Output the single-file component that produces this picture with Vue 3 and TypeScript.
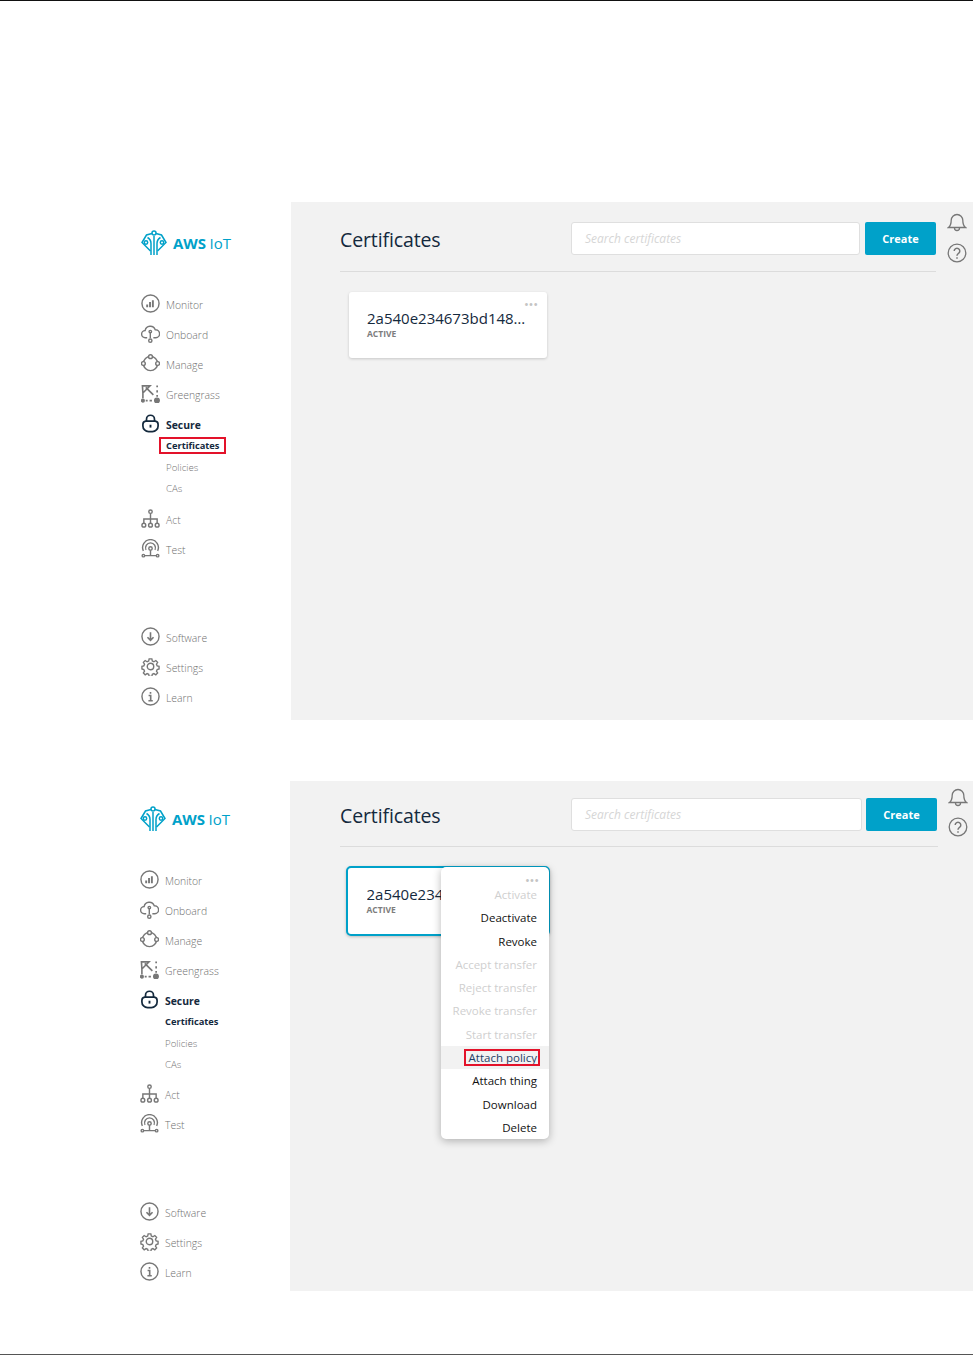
<script setup lang="ts">
interface NavItem { label: string; icon: string; active?: boolean }
interface Shot { id: string; annotated: boolean; open: boolean }

const topNav: NavItem[] = [
  { label: 'Monitor', icon: 'monitor' },
  { label: 'Onboard', icon: 'onboard' },
  { label: 'Manage', icon: 'manage' },
  { label: 'Greengrass', icon: 'greengrass' },
  { label: 'Secure', icon: 'secure', active: true },
]
const midNav: NavItem[] = [
  { label: 'Act', icon: 'act' },
  { label: 'Test', icon: 'test' },
]
const bottomNav: NavItem[] = [
  { label: 'Software', icon: 'software' },
  { label: 'Settings', icon: 'settings' },
  { label: 'Learn', icon: 'learn' },
]
const menu = [
  { label: 'Activate', off: true },
  { label: 'Deactivate' },
  { label: 'Revoke' },
  { label: 'Accept transfer', off: true },
  { label: 'Reject transfer', off: true },
  { label: 'Revoke transfer', off: true },
  { label: 'Start transfer', off: true },
  { label: 'Attach policy', mark: true },
  { label: 'Attach thing' },
  { label: 'Download' },
  { label: 'Delete' },
]
const shots: Shot[] = [
  { id: 'one', annotated: true, open: false },
  { id: 'two', annotated: false, open: true },
]
</script>

<template>
  <div class="page">
    <section v-for="s in shots" :key="s.id" class="shot" :class="s.id">
      <aside class="side">
        <div class="logo">
          <svg width="26" height="26" viewBox="0 0 26 26" fill="none" stroke="#00a1c9" stroke-width="1.500">
            <circle cx="13" cy="3" r="2" />
            <path d="M11 3.500 5.500 5 1 12.500 6 17.500 9.500 21" />
            <path d="M15 3.500 20.500 5 25 12.500 20 17.500 16.500 21" />
            <path d="M6.500 7.500C9 9 10 10.500 10 13.500V25" />
            <path d="M19.500 7.500C17 9 16 10.500 16 13.500V25" />
            <path d="M13 6V25" />
            <circle cx="5" cy="12.500" r="1.700" />
            <circle cx="21" cy="12.500" r="1.700" />
          </svg>
          <span class="logo-text"><b>AWS</b> IoT</span>
        </div>

        <nav class="group first">
          <div v-for="n in topNav" :key="n.label" class="row" :class="{ active: n.active }">
            <svg width="19" height="19" viewBox="0 0 20 20" fill="none" :stroke="n.active ? '#14293d' : '#777'" stroke-width="1.500" class="ico">
              <template v-if="n.icon === 'monitor'">
                <circle cx="10" cy="10" r="9" />
                <path d="M6.500 14V11M9.500 14V8.500M12.500 14V6.500" stroke-width="2" />
              </template>
              <template v-else-if="n.icon === 'onboard'">
                <path d="M6.500 14.500H4.600a3.800 3.800 0 0 1-.3-7.600A5.600 5.600 0 0 1 15 6a4.200 4.200 0 0 1 .6 8.500H13" />
                <path d="M9.800 9v6" />
                <circle cx="9.800" cy="8" r="1.300" />
                <circle cx="9.800" cy="17.500" r="1.700" />
              </template>
              <template v-else-if="n.icon === 'manage'">
                <circle cx="10" cy="10" r="7.500" />
                <circle cx="10" cy="2.800" r="2" fill="#fff" />
                <circle cx="2.500" cy="10" r="2" fill="#fff" />
                <circle cx="17.500" cy="10" r="2" fill="#fff" />
              </template>
              <template v-else-if="n.icon === 'greengrass'">
                <path d="M1.500 2h8L2 9.500zM2 9.500V15M5 3.500l8 8" stroke-width="1.700" />
                <path d="M17 1.500v2M17 6.500v2.500M17 11.500v2M5 17.500h2M9 17.500h2.500" stroke-width="1.800" />
                <circle cx="16.800" cy="17.300" r="2.400" fill="#777" />
                <circle cx="2" cy="17.500" r="1.400" fill="#777" />
              </template>
              <template v-else>
                <path d="M5 7.500h10a3.500 3.500 0 0 1 3 3.500v1.500a6 6 0 0 1-6 6H8a6 6 0 0 1-6-6V11a3.500 3.500 0 0 1 3-3.500z" stroke-width="1.800" />
                <path d="M5.800 7.500V5.500a4.200 4.200 0 0 1 8.400 0v2" stroke-width="1.800" />
                <path d="M10 11.300v3" stroke-width="2" />
              </template>
            </svg>
            <span>{{ n.label }}</span>
          </div>
          <div class="subs">
            <div class="sub cur"><span :class="{ redbox: s.annotated }">Certificates</span></div>
            <div class="sub">Policies</div>
            <div class="sub">CAs</div>
          </div>
        </nav>

        <nav class="group mid">
          <div v-for="n in midNav" :key="n.label" class="row">
            <svg width="19" height="19" viewBox="0 0 20 20" fill="none" stroke="#777" stroke-width="1.500" class="ico">
              <template v-if="n.icon === 'act'">
                <circle cx="10" cy="2.800" r="1.800" />
                <path d="M10 4.700V15M3 15v-4.500h14V15" />
                <circle cx="3" cy="17" r="2" />
                <circle cx="10" cy="17" r="2" />
                <circle cx="17" cy="17" r="2" />
              </template>
              <template v-else>
                <path d="M2.500 12.500a8.300 8.300 0 1 1 15 0" />
                <path d="M5.300 11.500a5.200 5.200 0 1 1 9.400 0" />
                <circle cx="10" cy="10" r="1.800" />
                <path d="M10 12v5M3.800 17.500h12.400" />
                <circle cx="2.500" cy="17.500" r="1.300" />
                <circle cx="17.500" cy="17.500" r="1.300" />
              </template>
            </svg>
            <span>{{ n.label }}</span>
          </div>
        </nav>

        <nav class="group last">
          <div v-for="n in bottomNav" :key="n.label" class="row">
            <svg width="19" height="19" viewBox="0 0 20 20" fill="none" stroke="#777" stroke-width="1.500" class="ico">
              <template v-if="n.icon === 'software'">
                <circle cx="10" cy="10" r="9" />
                <path d="M10 5.500V14M6.800 10.800 10 14l3.200-3.200" stroke-width="1.700" />
              </template>
              <template v-else-if="n.icon === 'settings'">
                <circle cx="10" cy="10" r="3.400" />
                <path d="M8.500 1.500h3l.5 2.400 1.800.8 2.100-1.300 2 2.100-1.300 2 .8 1.800 2.100.5v3l-2.100.5-.8 1.800 1.300 2-2 2.100-2.100-1.300-1.800.8-.5 2.300h-3l-.5-2.300-1.800-.8-2.100 1.300-2-2.100 1.300-2-.8-1.800-2.100-.5v-3l2.100-.5.8-1.800-1.300-2 2-2.100 2.100 1.300 1.800-.8z" transform="translate(.5 .5) scale(.95)" />
              </template>
              <template v-else>
                <circle cx="10" cy="10" r="9" />
                <path d="M8 9h2.200v5.500M7.800 14.500h4.600M10 5.200v1.800" stroke-width="1.700" />
              </template>
            </svg>
            <span>{{ n.label }}</span>
          </div>
        </nav>
      </aside>

      <main class="main">
        <div class="content">
          <header class="head">
            <h1>Certificates</h1>
            <div class="search">Search certificates</div>
            <button class="create">Create</button>
          </header>
          <div class="cards">
            <article class="card" :class="{ focus: s.open }">
              <span v-if="!s.open" class="dots">•••</span>
              <div class="cert">{{ s.open ? '2a540e234' : '2a540e234673bd148…' }}</div>
              <div class="status">ACTIVE</div>
              <div v-if="s.open" class="menu">
                <span class="dots menu-dots">•••</span>
                <div v-for="m in menu" :key="m.label" class="mi" :class="{ off: m.off, hover: m.mark }">
                  <span :class="{ redbox2: m.mark }">{{ m.label }}</span>
                </div>
              </div>
            </article>
          </div>
        </div>
        <div class="tools">
          <svg width="20" height="20" viewBox="0 0 20 20" fill="none" stroke="#777" stroke-width="1.300">
            <path d="M1.500 15.500c2-1.500 2.700-3 2.700-7.200a5.800 5.800 0 0 1 11.600 0c0 4.200.7 5.700 2.700 7.200z" />
            <path d="M7.500 16a2.500 2.500 0 0 0 5 0" />
          </svg>
          <svg width="20" height="20" viewBox="0 0 20 20" fill="none" stroke="#777" stroke-width="1.300">
            <circle cx="10" cy="10" r="8.800" />
            <path d="M7.200 8a2.800 2.800 0 1 1 4.300 2.400c-1 .7-1.500 1.100-1.500 2.400M10 14.200v1.600" stroke-width="1.500" />
          </svg>
        </div>
      </main>
    </section>
  </div>
</template>

<style>
html, body { margin: 0; background: #fff; }
</style>

<style scoped>
.page {
  width: 973px;
  height: 1355px;
  box-sizing: border-box;
  border-top: 1px solid #111;
  border-bottom: 1px solid #555;
  overflow: hidden;
  font-family: "Open Sans", "Noto Sans", sans-serif;
  color: #14293d;
}
.shot { display: flex; }
.shot.one { margin-top: 201px; height: 518px; --lift: 3px; --side: 291px; --logo-l: 141px; --mid: 5px; }
.shot.two { margin-top: 61px; height: 510px; --lift: 0px; --side: 290px; --logo-l: 140px; --mid: 4px; }
.side {
  width: var(--side);
  flex: none;
  box-sizing: border-box;
  padding: calc(25px + var(--lift)) 0 0 var(--logo-l);
  display: flex;
  flex-direction: column;
}
.logo { display: flex; align-items: center; height: 26px; gap: 6px; }
.logo-text { color: #00a1c9; font-size: 15px; font-weight: 400; letter-spacing: -0.100px; }
.logo-text b { font-weight: 700; }
.group.first { margin-top: 34px; }
.group.mid { margin-top: var(--mid); }
.group.last { margin-top: 58px; }
.row {
  height: 30px;
  display: flex;
  align-items: center;
  gap: 6px;
  font-size: 10.400px;
  font-weight: 300;
  color: #6f6f6f;
}
.ico { flex: none; margin-top: -3px; }
.row.active { color: #14293d; font-weight: 700; }
.subs { margin-left: 25px; font-size: 9.700px; margin-top: -5px; }
.sub { height: 21.500px; line-height: 21.500px; font-weight: 300; color: #777; position: relative; }
.sub.cur { font-size: 9.300px; font-weight: 700; color: #14293d; }
.redbox {
  position: relative;
}
.redbox::after {
  content: "";
  position: absolute;
  left: -7px;
  right: -6px;
  top: -2px;
  bottom: -2px;
  border: 2px solid #e3122a;
}
.main {
  flex: 1;
  background: #f2f2f2;
  display: flex;
  padding-left: 49px;
  min-width: 0;
}
.two .main { padding-left: 50px; }
.content { width: 596px; flex: none; }
.two .content { width: 598px; }
.head {
  height: 70px;
  box-sizing: border-box;
  border-bottom: 1px solid #dcdcdc;
  display: flex;
  align-items: flex-start;
  padding-top: 20px;
}
.two .head { height: 66px; padding-top: 17px; }
h1 {
  margin: 0;
  width: 231px;
  font-size: 19.500px;
  font-weight: 400;
  line-height: 35px;
  letter-spacing: -0.120px;
}
.search {
  width: 289px;
  height: 33px;
  box-sizing: border-box;
  background: #fff;
  border: 1px solid #dfdfdf;
  border-radius: 3px;
  padding-left: 13px;
  line-height: 32px;
  font-size: 12px;
  font-style: italic;
  color: #d6d6d6;
  margin-right: 5px;
}
.two .search { width: 291px; margin-right: 4px; }
.create {
  width: 71px;
  height: 33px;
  border: 0;
  border-radius: 2px;
  background: #00a1c9;
  color: #fff;
  font: 700 11px "Open Sans", "Noto Sans", sans-serif;
  padding: 0;
}
.cards { padding: 20px 0 0 9px; }
.two .cards { padding: 19px 0 0 6px; }
.card {
  position: relative;
  width: 198px;
  height: 66px;
  box-sizing: border-box;
  background: #fff;
  border-radius: 3px;
  padding: 16px 0 0 18px;
  box-shadow: 0 1px 3px rgba(0, 0, 0, .18);
}
.card.focus {
  width: 204px;
  height: 70px;
  border: 2px solid #00a1c9;
  border-radius: 5px;
  padding: 16px 0 0 18.500px;
  box-shadow: 0 1px 3px rgba(0, 0, 0, .22);
}
.dots {
  position: absolute;
  right: 9px;
  top: 4px;
  font-size: 13px;
  line-height: 16px;
  letter-spacing: -0.200px;
  color: #c4c4c4;
}
.cert { font-size: 15px; line-height: 21px; color: #14293d; white-space: nowrap; overflow: hidden; width: 160px; }
.status { font-size: 8.500px; font-weight: 700; color: #7d7d7d; line-height: 10px; letter-spacing: 0; }
.menu {
  position: absolute;
  left: 93px;
  top: -1px;
  width: 108px;
  box-sizing: border-box;
  background: #fff;
  border-radius: 5px;
  padding-top: 16px;
  box-shadow: 0 2px 8px rgba(0, 0, 0, .28);
}
.menu-dots { right: 10px; top: 5px; }
.mi {
  height: 23.300px;
  line-height: 23.300px;
  text-align: right;
  padding-right: 12px;
  font-size: 11.500px;
  color: #111;
  white-space: nowrap;
}
.mi.off { color: #cfcfcf; }
.mi.hover { background: #f2f2f2; color: #1f3f66; }
.redbox2 { position: relative; }
.redbox2::after {
  content: "";
  position: absolute;
  left: -5px;
  right: -3px;
  top: -1px;
  bottom: -1px;
  border: 2px solid #e3122a;
}
.tools {
  margin-left: 11px;
  display: flex;
  flex-direction: column;
  gap: 11px;
  padding-top: 10px;
}
.two .tools { margin-left: 10px; padding-top: 6px; gap: 10px; }
</style>
